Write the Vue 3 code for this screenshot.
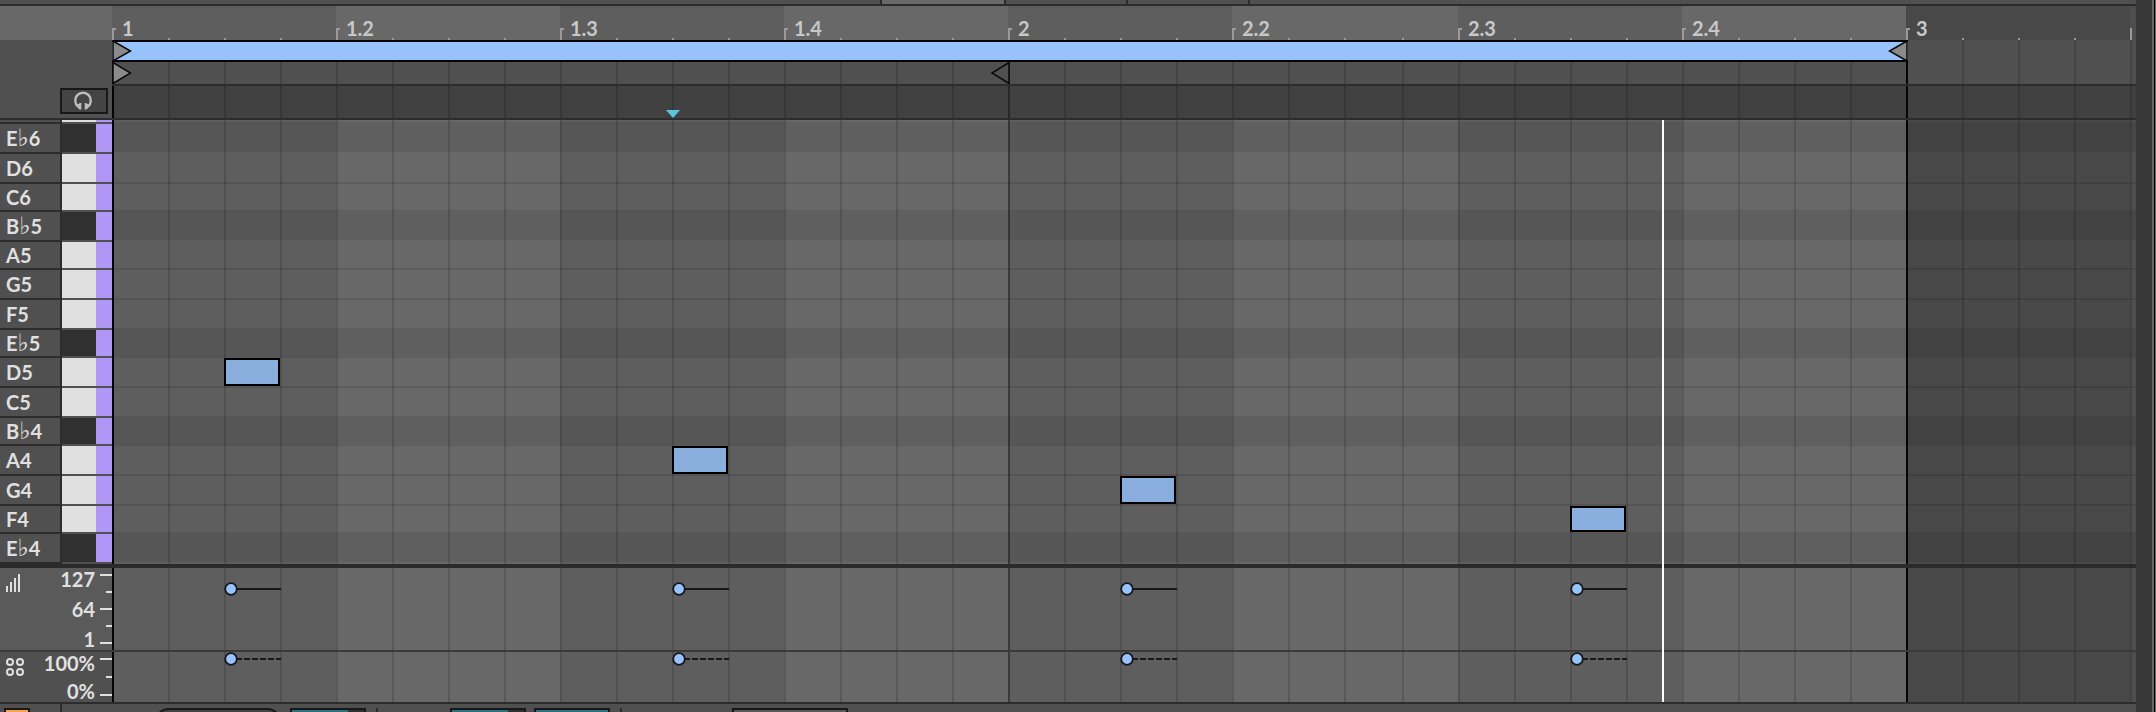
<script setup>
const BEATS = 9
const STEPS_PER_BEAT = 4
const LOOP_STEPS = 32
const PLAYHEAD_BEAT = 6.92
const TRACK_UNITS = BEATS * STEPS_PER_BEAT * 56 + 8

const steps = Array.from({ length: BEATS * STEPS_PER_BEAT + 1 }, (_, i) => {
  const beat = Math.floor(i / STEPS_PER_BEAT)
  const onBeat = i % STEPS_PER_BEAT === 0
  return {
    id: i,
    onBeat,
    last: i === BEATS * STEPS_PER_BEAT,
    classes: {
      light: beat % 2 === 1,
      outside: i >= LOOP_STEPS,
      tail: i === BEATS * STEPS_PER_BEAT,
      bar: i === 16,
      edge: i === 0 || i === LOOP_STEPS,
    },
  }
})

const beatLabels = ['1', '1.2', '1.3', '1.4', '2', '2.2', '2.3', '2.4', '3']

const rows = [
  { note: 'E', octave: 6, flat: true, key: 30, lane: 30 },
  { note: 'D', octave: 6, key: 30, lane: 32, line: true },
  { note: 'C', octave: 6, key: 28, lane: 26 },
  { note: 'B', octave: 5, flat: true, key: 30, lane: 30 },
  { note: 'A', octave: 5, key: 28, lane: 30, line: true },
  { note: 'G', octave: 5, key: 30, lane: 30, line: true },
  { note: 'F', octave: 5, key: 30, lane: 28 },
  { note: 'E', octave: 5, flat: true, key: 28, lane: 30 },
  { note: 'D', octave: 5, key: 30, lane: 30, line: true, step: 2 },
  { note: 'C', octave: 5, key: 30, lane: 28 },
  { note: 'B', octave: 4, flat: true, key: 28, lane: 30 },
  { note: 'A', octave: 4, key: 30, lane: 30, line: true, step: 10 },
  { note: 'G', octave: 4, key: 30, lane: 30, line: true, step: 18 },
  { note: 'F', octave: 4, key: 28, lane: 26, step: 26 },
  { note: 'E', octave: 4, flat: true, key: 30, lane: 30 },
]

const noteSteps = [2, 10, 18, 26]
const playheadLeft = `${(PLAYHEAD_BEAT * STEPS_PER_BEAT * 56 * 100) / TRACK_UNITS}%`
</script>

<template>
  <div class="editor">
    <main class="main">
      <div class="tabs"><i class="gap"></i><i class="tab active"></i><i class="tab"></i><i class="tab"></i><i class="tab end"></i></div>

      <div class="row ruler">
        <div class="side"></div>
        <div class="track">
          <div class="cells plain">
            <i v-for="s in steps" :key="s.id" :class="s.classes">
              <b :class="s.last ? 'tick tall' : s.onBeat ? 'tick hook' : 'tick'"></b>
            </i>
          </div>
          <span v-for="(label, i) in beatLabels" :key="label" class="beat" :style="{ gridColumn: `${i * 4 + 1} / span 4` }">{{ label }}</span>
        </div>
      </div>

      <div class="row head">
        <div class="side">
          <button type="button" class="preview" aria-label="Preview notes">
            <svg width="20" height="20" viewBox="0 0 20 20">
              <path d="M5 15.500 A7.800 7.800 0 1 1 15 15.500" fill="none" stroke="#bdbdbd" stroke-width="2.400" />
              <path d="M3.500 14 L7 12 H8.300 V18.500 H6.500 Q4.500 17.500 3.500 14Z M16.500 14 L13 12 H11.700 V18.500 H13.500 Q15.500 17.500 16.500 14Z" fill="#bdbdbd" />
            </svg>
          </button>
        </div>
        <div class="stack">
          <div class="cells clear"><i v-for="s in steps" :key="s.id" :class="s.classes"></i></div>
          <div class="track loop-row">
            <div class="loop">
              <svg width="20" height="22" viewBox="0 0 20 22">
                <path d="M1 1 L18.500 11 L1 21Z" fill="#8a8a8a" stroke="#0a0a0a" stroke-width="1.500" />
              </svg>
              <svg width="20" height="22" viewBox="0 0 20 22">
                <path d="M19 1 L1.500 11 L19 21Z" fill="#8a8a8a" stroke="#0a0a0a" stroke-width="1.500" />
              </svg>
            </div>
          </div>
          <div class="track marker-row">
            <svg class="start" width="20" height="22" viewBox="0 0 20 22">
              <path d="M1 0.500 L18.500 11 L1 21.500Z" fill="#8a8a8a" stroke="#0a0a0a" stroke-width="1.500" />
            </svg>
            <svg class="finish" width="20" height="22" viewBox="0 0 20 22">
              <path d="M19 0.500 L2 11 L19 21.500Z" fill="#505050" stroke="#0a0a0a" stroke-width="1.500" />
            </svg>
          </div>
          <div class="track scrub-row">
            <svg class="insert" width="14" height="8" viewBox="0 0 14 8"><path d="M0 0 H14 L7 8Z" fill="#5fc3dc" /></svg>
          </div>
        </div>
      </div>

      <div class="body">
        <div class="row notes">
          <div class="side keyboard">
            <div class="key sliver"><span class="name"></span><i class="ivory"></i><i class="range"></i></div>
            <div v-for="r in rows" :key="r.note + r.octave" class="key" :style="{ height: `${r.key}px` }">
              <span class="name">{{ r.note }}<span v-if="r.flat" class="flat">♭</span>{{ r.octave }}</span>
              <i class="ivory" :class="{ ebony: r.flat }"></i>
              <i class="range"></i>
            </div>
          </div>
          <div class="stack">
            <div class="cells"><i v-for="s in steps" :key="s.id" :class="s.classes"></i></div>
            <div class="lanes">
              <div v-for="r in rows" :key="r.note + r.octave" class="track lane" :class="{ dark: r.flat, line: r.line }" :style="{ height: `${r.lane}px` }">
                <div v-if="r.step" class="note" :style="{ gridColumn: r.step + 1 }"></div>
              </div>
            </div>
          </div>
        </div>

        <div class="row velocity">
          <div class="side">
            <svg class="icon" width="14" height="18" viewBox="0 0 14 18"><path d="M0 12h2v6H0z M4 8h2v10H4z M8 4h2v14H8z M12 0h2v18h-2z" fill="#e0e0e0" /></svg>
            <div class="scale"><span>127</span><span>64</span><span>1</span></div>
            <div class="ticks"><i></i><i></i><i></i><i></i><i></i></div>
          </div>
          <div class="stack">
            <div class="cells"><i v-for="s in steps" :key="s.id" :class="s.classes"></i></div>
            <div class="track pins">
              <svg v-for="n in noteSteps" :key="n" width="58" height="14" viewBox="0 0 58 14" :style="{ gridColumn: n + 1 }">
                <path d="M12 7H57" stroke="#181818" stroke-width="2" />
                <circle cx="7" cy="7" r="5.800" fill="#97c2fb" stroke="#181818" stroke-width="1.800" />
              </svg>
            </div>
          </div>
        </div>

        <div class="row chance">
          <div class="side">
            <svg class="icon" width="18" height="18" viewBox="0 0 18 18" fill="none" stroke="#e0e0e0" stroke-width="2">
              <circle cx="4" cy="4" r="3" /><circle cx="14" cy="4" r="3" /><circle cx="4" cy="14" r="3" /><circle cx="14" cy="14" r="3" />
            </svg>
            <div class="scale"><span>100%</span><span>0%</span></div>
            <div class="ticks"><i></i><i></i><i></i></div>
          </div>
          <div class="stack">
            <div class="cells"><i v-for="s in steps" :key="s.id" :class="s.classes"></i></div>
            <div class="track pins">
              <svg v-for="n in noteSteps" :key="n" width="58" height="14" viewBox="0 0 58 14" :style="{ gridColumn: n + 1 }">
                <path d="M12 7H57" stroke="#181818" stroke-width="2" stroke-dasharray="6 2" />
                <circle cx="7" cy="7" r="5.800" fill="#97c2fb" stroke="#181818" stroke-width="1.800" />
              </svg>
            </div>
          </div>
        </div>
        <div class="playhead-area"><div class="playhead" :style="{ left: playheadLeft }"></div></div>
      </div>

      <footer class="devices">
        <i class="chip orange"></i>
        <i class="divider first"></i>
        <i class="pill"></i>
        <i class="chip meter"></i>
        <i class="divider"></i>
        <i class="chip meter second"></i>
        <i class="chip full"></i>
        <i class="divider"></i>
        <i class="chip field"></i>
      </footer>
    </main>
    <aside class="scroll"></aside>
  </div>
</template>

<style>
html,
body {
  background: #505050;
}
</style>

<style scoped>
* {
  box-sizing: border-box;
}
.editor {
  display: flex;
  min-height: 100vh;
  overflow: hidden;
  background: #505050;
  color: #e0e0e0;
  font: 700 20px/24px Lato, "DejaVu Sans", sans-serif;
}
.main {
  flex: 1;
  min-width: 0;
  display: flex;
  flex-direction: column;
}
.scroll {
  width: 20px;
  background: linear-gradient(90deg, #383838 16px, #666 16px, #666 18px, #000 18px, #000 19px, #666 19px);
}
.tabs {
  display: flex;
  height: 6px;
  border-bottom: 2px solid #2c2c2c;
}
.gap {
  width: 880px;
}
.tab {
  width: 122px;
  border-left: 2px solid #2c2c2c;
}
.tab.active {
  width: 124px;
  background: #696969;
}
.row {
  display: flex;
}
.side {
  flex: none;
  width: 112px;
}
.track,
.cells {
  display: grid;
  grid-template-columns: repeat(22, minmax(0, 56fr)) minmax(0, 58fr) repeat(13, minmax(0, 56fr)) minmax(0, 6fr);
}
.track,
.stack {
  position: relative;
  flex: 1;
  min-width: 0;
}
.cells {
  position: absolute;
  inset: 0;
}
.cells i {
  background: #5e5e5e;
  border-left: 2px solid rgba(0, 0, 0, 0.14);
}
.cells i.light {
  background: #686868;
}
.cells i.outside {
  background: #484848;
}
.cells i.tail {
  background: #4e4e4e;
}
.cells i.bar {
  border-left-color: rgba(0, 0, 0, 0.38);
}
.cells i.edge {
  border-left-color: #050505;
}
.cells.clear i {
  background: none;
}
.cells.plain i {
  position: relative;
  border-left: 0;
}

.ruler {
  height: 34px;
  color: #c8c8c8;
}
.ruler .side {
  background: #686868;
}
.tick {
  position: absolute;
  left: 0;
  bottom: 0;
  width: 2px;
  height: 2px;
  background: #9a9a9a;
}
.tick.tall {
  height: 12px;
}
.tick.hook {
  width: 4px;
  height: 12px;
  background: none;
  border-left: 2px solid #9a9a9a;
  border-top: 2px solid #9a9a9a;
}
.beat {
  position: relative;
  grid-row: 1;
  padding: 10px 0 0 10px;
}

.head {
  height: 80px;
  border-bottom: 2px solid #2c2c2c;
}
.head .side {
  display: flex;
  justify-content: flex-end;
  align-items: flex-end;
  padding: 0 4px 4px 0;
}
.preview {
  display: flex;
  align-items: center;
  justify-content: center;
  width: 48px;
  height: 26px;
  padding: 0 2px 0 0;
  border: 2px solid #181818;
  background: #444;
}
.loop {
  grid-column: 1 / 33;
  display: flex;
  justify-content: space-between;
  height: 22px;
  margin-right: -2px;
  background: linear-gradient(#050505 2px, #97c2fb 2px, #97c2fb 20px, #050505 20px);
}
.marker-row {
  height: 24px;
  border-bottom: 2px solid #2c2c2c;
}
.scrub-row {
  height: 32px;
  align-items: end;
  background: rgba(0, 0, 0, 0.18);
}
.start {
  grid-column: 1;
  grid-row: 1;
}
.finish {
  grid-column: 16;
  grid-row: 1;
  justify-self: end;
  margin-right: -2px;
}
.insert {
  grid-column: 11;
  margin-left: -6px;
}

.body {
  position: relative;
}
.notes {
  border-bottom: 4px solid #2a2a2a;
}
.key {
  display: flex;
}
.key.sliver {
  height: 4px;
}
.name {
  display: flex;
  align-items: center;
  width: 62px;
  padding-left: 6px;
  border-right: 2px solid #2c2c2c;
  border-bottom: 2px solid #2c2c2c;
}
.flat {
  font-family: "DejaVu Sans", sans-serif;
  font-size: 24px;
  font-weight: 400;
}
.ivory {
  width: 34px;
  margin-bottom: 2px;
  background: #e0e0e0;
}
.ivory.ebony {
  background: #303030;
}
.range {
  width: 16px;
  margin-bottom: 2px;
  background: #b096f5;
}
.lanes {
  position: relative;
  padding: 2px 0;
}
.lane.dark {
  background: rgba(0, 0, 0, 0.08);
}
.lane.line {
  border-bottom: 2px solid rgba(0, 0, 0, 0.1);
}
.note {
  border: 2px solid #000;
  background: #8aafde;
}

.velocity {
  height: 84px;
  border-bottom: 2px solid #3a3a3a;
}
.chance {
  height: 52px;
  border-bottom: 2px solid #2c2c2c;
}
.velocity .side,
.chance .side {
  display: flex;
  align-items: flex-start;
}
.velocity .side {
  background: #5a5a5a;
}
.icon {
  flex: none;
  margin: 6px 0 0 6px;
}
.scale {
  flex: 1;
  display: flex;
  flex-direction: column;
  align-items: flex-end;
  gap: 6px;
  margin-top: -1px;
  padding-right: 5px;
}
.chance .scale {
  gap: 4px;
}
.ticks {
  width: 12px;
  display: flex;
  flex-direction: column;
  align-items: flex-end;
  gap: 15px;
  padding-top: 6px;
}
.ticks i {
  width: 12px;
  height: 2px;
  background: #e0e0e0;
}
.ticks i:nth-child(even) {
  width: 6px;
}
.chance .ticks {
  gap: 16px;
}
.pins {
  padding-top: 14px;
}
.chance .pins {
  padding-top: 0;
}
.pins svg {
  grid-row: 1;
}
.playhead-area {
  position: absolute;
  inset: 0 0 2px 112px;
  pointer-events: none;
}
.playhead {
  position: absolute;
  top: 0;
  bottom: 0;
  width: 2px;
  background: #fff;
}

.devices {
  flex: 1;
  display: flex;
  min-height: 8px;
  max-height: 8px;
  overflow: hidden;
}
.devices i {
  flex: none;
}
.chip {
  width: 76px;
  margin-top: 4px;
  border: 2px solid #181818;
  border-bottom: 0;
}
.orange {
  width: 26px;
  margin-left: 4px;
  background: #f9a550;
}
.divider {
  width: 2px;
  margin: 4px 0 0 10px;
  background: #2c2c2c;
}
.divider.first {
  margin: 0 0 0 30px;
}
.pill {
  width: 124px;
  height: 24px;
  margin: 4px 10px 0 94px;
  border: 2px solid #181818;
  border-radius: 12px;
  background: #444;
}
.meter {
  background: linear-gradient(90deg, #2e7080 56px, #303030 56px);
}
.second {
  margin-left: 72px;
}
.full {
  margin-left: 8px;
  background: #2e7080;
}
.field {
  width: 116px;
  margin-left: 110px;
  background: #5a5a5a;
}
</style>
